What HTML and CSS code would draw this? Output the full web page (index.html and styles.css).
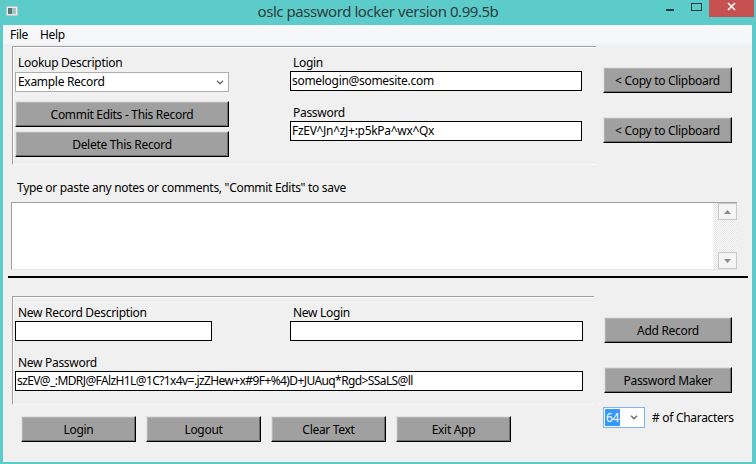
FILE: index.html
```html
<!DOCTYPE html>
<html lang="en">
    <head>
        <meta charset="UTF-8">
        <meta name="viewport" content="width=device-width, initial-scale=1.0">
        <title>oslc password locker version 0.99.5b</title>
        <link rel="stylesheet" href="styles.css">
    </head>
    <body>
        <div class="window">
            <div class="titlebar">
                <div class="app-icon">
                    <svg width="12" height="10" viewBox="0 0 12 10">
                        <rect x="0.5" y="0.5" width="11" height="9" fill="#e4eeee" stroke="#b9cccc"/>
                        <rect x="2" y="2" width="4" height="6" fill="#4f7b78"/>
                        <rect x="6" y="2" width="4" height="6" fill="#a9c2c0"/>
                    </svg>
                </div>
                <div class="title">oslc password locker version 0.99.5b</div>
                <div class="controls">
                    <span class="ctl">
                        <svg width="26" height="17" viewBox="0 0 26 17"><rect x="9" y="9" width="8" height="2" fill="#1f3b3b"/></svg>
                    </span>
                    <span class="ctl">
                        <svg width="26" height="17" viewBox="0 0 26 17"><rect x="8.5" y="3.5" width="10" height="7" fill="none" stroke="#1f3b3b"/></svg>
                    </span>
                    <span class="ctl close">
                        <svg width="45" height="17" viewBox="0 0 45 17"><path d="M19 3 L26 10 M26 3 L19 10" stroke="#fff" stroke-width="1.6"/></svg>
                    </span>
                </div>
            </div>

            <div class="client">
                <div class="menubar">
                    <span class="menu-item">File</span>
                    <span class="menu-item">Help</span>
                </div>

                <!-- lookup / edit existing record -->
                <div class="record-row">
                    <div class="group group-record">
                        <div class="col col-left">
                            <div class="label">Lookup Description</div>
                            <div class="combo">
                                <span>Example Record</span>
                                <svg width="8" height="5" viewBox="0 0 8 5"><path d="M1 0.8 L4 3.8 L7 0.8" fill="none" stroke="#6a6a6a" stroke-width="1.4"/></svg>
                            </div>
                            <button class="btn btn-commit">Commit Edits - This Record</button>
                            <button class="btn btn-delete">Delete This Record</button>
                        </div>
                        <div class="col col-mid">
                            <div class="label">Login</div>
                            <div class="entry">somelogin@somesite.com</div>
                            <div class="label label-next">Password</div>
                            <div class="entry">FzEV^Jn^zJ+:p5kPa^wx^Qx</div>
                        </div>
                    </div>
                    <div class="side side-top">
                        <button class="btn btn-side">&lt; Copy to Clipboard</button>
                        <button class="btn btn-side btn-next">&lt; Copy to Clipboard</button>
                    </div>
                </div>

                <div class="notes-label">Type or paste any notes or comments, "Commit Edits" to save</div>
                <div class="notes">
                    <div class="notes-area"></div>
                    <div class="scrollbar">
                        <span class="arrow">
                            <svg width="7" height="4" viewBox="0 0 7 4"><path d="M0 4 L3.5 0 L7 4 Z" fill="#8c8c8c"/></svg>
                        </span>
                        <span class="track"></span>
                        <span class="arrow">
                            <svg width="7" height="4" viewBox="0 0 7 4"><path d="M0 0 L3.5 4 L7 0 Z" fill="#8c8c8c"/></svg>
                        </span>
                    </div>
                </div>

                <div class="divider"></div>

                <!-- new record -->
                <div class="new-row">
                    <div class="new-main">
                        <div class="group group-new">
                            <div class="field-row">
                                <div class="field field-desc">
                                    <div class="label">New Record Description</div>
                                    <div class="entry entry-desc"></div>
                                </div>
                                <div class="field field-login">
                                    <div class="label">New Login</div>
                                    <div class="entry"></div>
                                </div>
                            </div>
                            <div class="label label-next">New Password</div>
                            <div class="entry entry-pass">szEV@_:MDRJ@FAlzH1L@1C?1x4v=.jzZHew+x#9F+%4)D+JUAuq*Rgd&gt;SSaLS@ll</div>
                        </div>
                        <div class="actions">
                            <button class="btn btn-action">Login</button>
                            <button class="btn btn-action">Logout</button>
                            <button class="btn btn-action">Clear Text</button>
                            <button class="btn btn-action">Exit App</button>
                        </div>
                    </div>
                    <div class="side side-new">
                        <button class="btn btn-side">Add Record</button>
                        <button class="btn btn-side btn-next">Password Maker</button>
                        <div class="chars">
                            <div class="chars-combo">
                                <span class="chars-value">64</span>
                                <svg width="8" height="5" viewBox="0 0 8 5"><path d="M1 0.8 L4 3.8 L7 0.8" fill="none" stroke="#6a6a6a" stroke-width="1.4"/></svg>
                            </div>
                            <span class="chars-label"># of Characters</span>
                        </div>
                    </div>
                </div>
            </div>
        </div>
    </body>
</html>
```

FILE: styles.css
```css
* {
    box-sizing: border-box;
}
body {
    margin: 0;
    background-color: #5ccccb;
    font-family: 'Noto Sans', 'Open Sans', Arial, sans-serif;
    font-size: 12px;
    letter-spacing: -0.3px;
    color: #000;
}
.window {
    width: 756px;
    height: 464px;
    display: flex;
    flex-direction: column;
}
.titlebar {
    height: 25px;
    display: grid;
    grid-template-columns: 1fr auto 1fr;
    align-items: start;
}
.app-icon {
    padding: 6px 0 0 6px;
    line-height: 0;
}
.title {
    font-size: 15px;
    letter-spacing: -0.45px;
    line-height: 23px;
    color: #2b3d3d;
}
.controls {
    display: flex;
    justify-content: flex-end;
    padding-right: 2px;
}
.ctl {
    line-height: 0;
}
.ctl.close {
    background-color: #c75050;
}
.client {
    margin: 0 4px 0 3px;
    height: 437px;
    background-color: #f0f0f0;
}
.menubar {
    height: 19px;
    line-height: 19px;
    background-color: #f6f7f8;
    display: flex;
    gap: 12px;
    padding-left: 7px;
}
.label {
    height: 16px;
    line-height: 16px;
    padding-left: 3px;
    white-space: nowrap;
}
.label-next {
    margin-top: 14px;
}
.group {
    border-top: 1px solid #a0a0a0;
    border-left: 1px solid #a0a0a0;
    border-bottom: 1px solid #fafafa;
    box-shadow: inset 1px 1px 0 #fff;
}
.record-row {
    display: flex;
    margin-top: 2px;
    padding-left: 9px;
}
.group-record {
    width: 584px;
    display: flex;
    padding: 8px 0 7px 2px;
    gap: 61px;
}
.col-left {
    width: 214px;
}
.col-mid {
    width: 292px;
}
.combo {
    margin-top: 1px;
    height: 20px;
    border: 1px solid #adadad;
    background-color: #fff;
    display: flex;
    align-items: center;
    justify-content: space-between;
    padding: 0 4px 0 2px;
    line-height: 18px;
}
.entry {
    height: 20px;
    line-height: 18px;
    border: 1px solid #000;
    background-color: #fff;
    padding-left: 1px;
    white-space: nowrap;
    overflow: hidden;
}
.btn {
    display: block;
    font-family: inherit;
    font-size: 12px;
    letter-spacing: -0.3px;
    color: #000;
    background-color: #a0a0a0;
    border: 1px solid;
    border-color: #e3e3e3 #000 #000 #e3e3e3;
    box-shadow: inset -1px -1px 0 #6e6e6e, inset 1px 1px 0 #b4b4b4;
    padding: 0;
    height: 26px;
}
.btn-commit,
.btn-delete {
    width: 214px;
}
.btn-commit {
    margin-top: 9px;
}
.btn-delete {
    margin-top: 4px;
}
.side {
    display: flex;
    flex-direction: column;
}
.side-top {
    margin: 21px 0 0 7px;
}
.btn-side {
    width: 129px;
}
.btn-next {
    margin-top: 24px;
}
.notes-label {
    margin-top: 15px;
    padding-left: 14px;
    line-height: 16px;
}
.notes {
    margin: 6px 0 0 8px;
    width: 726px;
    height: 68px;
    display: flex;
    border-top: 1px solid #a0a0a0;
    border-left: 1px solid #a0a0a0;
    border-bottom: 1px solid #e3e3e3;
    background-color: #fff;
}
.notes-area {
    flex: 1;
}
.scrollbar {
    width: 24px;
    display: flex;
    flex-direction: column;
    background: repeating-conic-gradient(#fdfdfd 0 25%, #e4e4e4 0 50%) 0 0 / 2px 2px;
    padding-left: 5px;
}
.arrow {
    width: 19px;
    height: 17px;
    border: 1px solid #c9c9c9;
    background-color: #f4f4f4;
    display: flex;
    align-items: center;
    justify-content: center;
}
.track {
    flex: 1;
}
.divider {
    margin: 6px 0 0 5px;
    width: 740px;
    height: 2px;
    background-color: #000;
}
.new-row {
    display: flex;
    margin-top: 18px;
    padding-left: 9px;
}
.group-new {
    width: 582px;
    padding: 8px 0 13px 2px;
}
.field-row {
    display: flex;
}
.field-desc {
    width: 275px;
}
.entry-desc {
    width: 197px;
}
.field-login {
    width: 293px;
}
.entry-pass {
    width: 568px;
    letter-spacing: -0.6px;
}
.actions {
    display: flex;
    gap: 10px;
    margin: 11px 0 0 9px;
}
.btn-action {
    width: 115px;
}
.side-new {
    margin: 21px 0 0 10px;
}
.side-new .btn-side {
    width: 128px;
}
.chars {
    display: flex;
    align-items: center;
    gap: 7px;
    margin: 14px 0 0 -1px;
}
.chars-combo {
    width: 42px;
    height: 21px;
    border: 1px solid #7eb4ea;
    background-color: #fff;
    display: flex;
    align-items: center;
    justify-content: space-between;
    padding: 0 6px 0 1px;
}
.chars-value {
    background-color: #3399ff;
    color: #fff;
    line-height: 17px;
    padding: 0 1px;
}
```
